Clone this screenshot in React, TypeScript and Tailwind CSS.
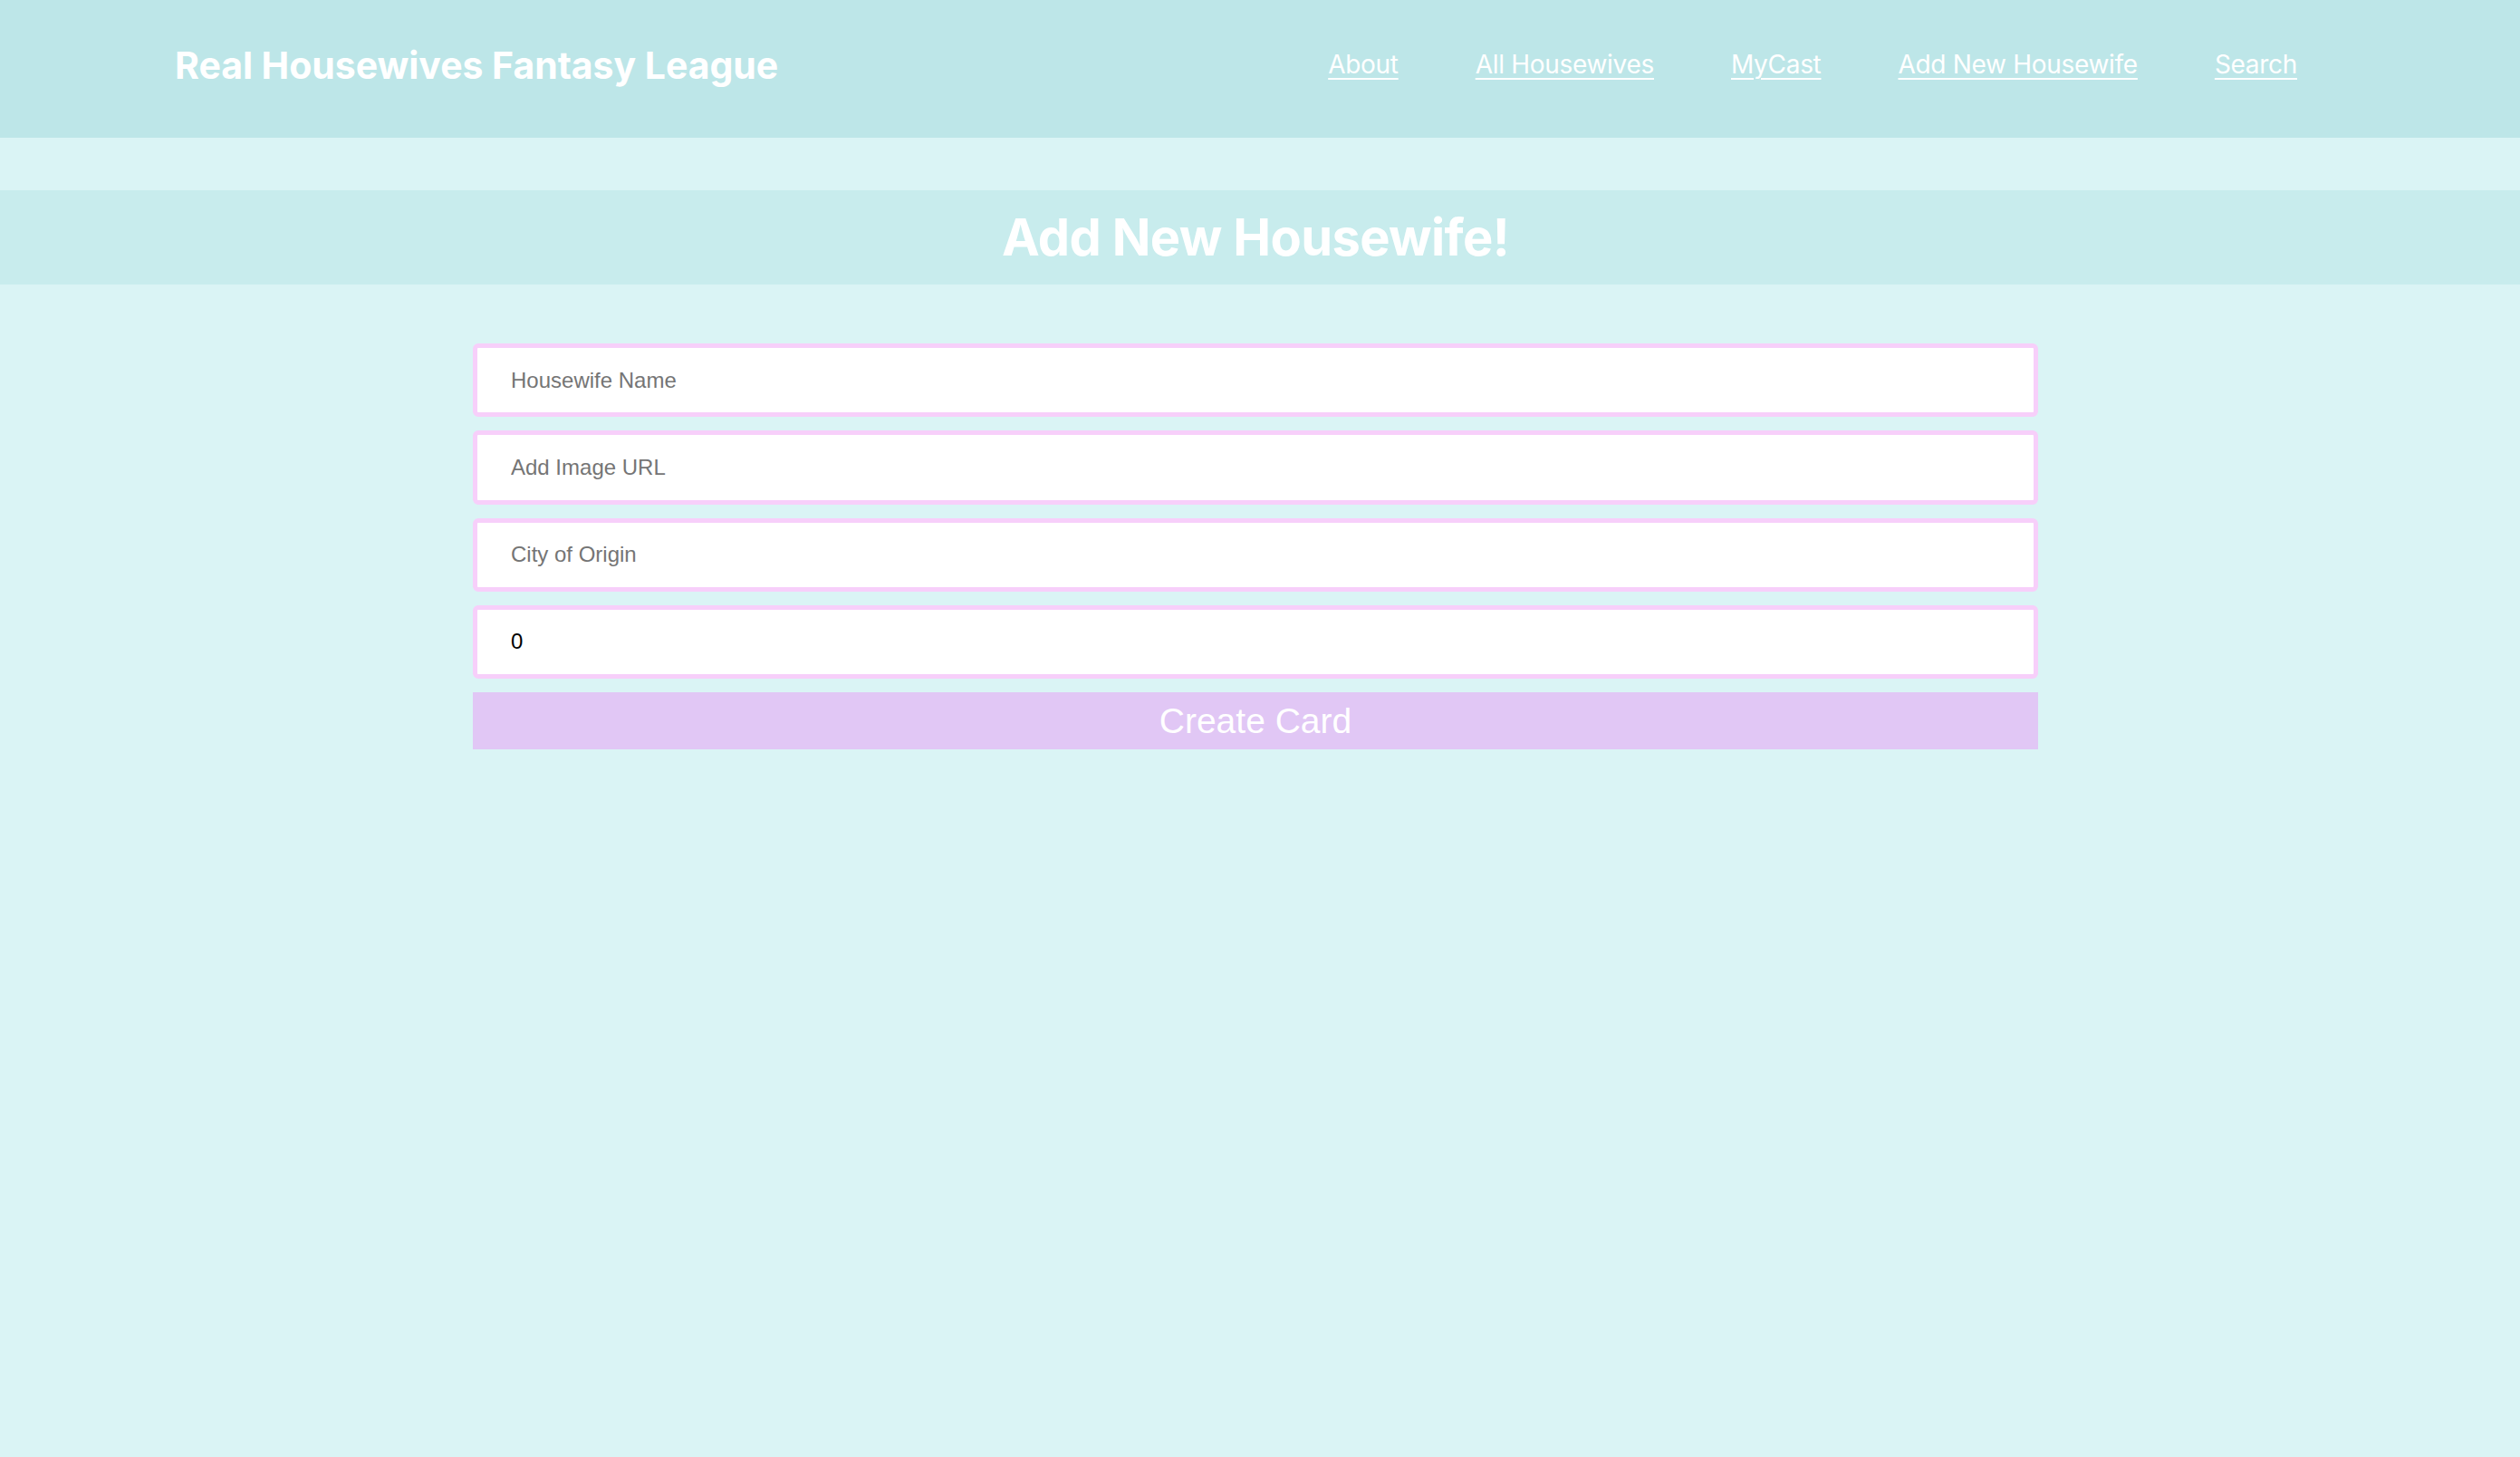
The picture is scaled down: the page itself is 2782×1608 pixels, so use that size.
import React from "react";

export default function App() {
  const links = ["About", "All Housewives", "MyCast", "Add New Housewife", "Search"];
  return (
    <div className="min-h-[1608px] w-full bg-[#daf4f5] font-['Inter','Noto_Sans',sans-serif]">
      <header className="flex h-[152px] items-center justify-between bg-[#bde6e8] pl-[193px] pr-[246px] pb-[8px]">
        <h1 className="text-[41px] font-bold leading-none tracking-[-0.05px] text-white">
          Real Housewives Fantasy League
        </h1>
        <nav className="flex items-center gap-[85px] pb-[2px]">
          {links.map((l) => (
            <a
              key={l}
              href="#"
              className="text-[28px] leading-none tracking-[-0.3px] text-white underline decoration-[2px] underline-offset-[5px]"
            >
              {l}
            </a>
          ))}
        </nav>
      </header>
      <div className="h-[58px]" />
      <div className="flex h-[104px] items-center justify-center bg-[#c8eced] pr-[10px]">
        <h2 className="text-[56px] font-bold leading-none tracking-[-0.65px] text-white">Add New Housewife!</h2>
      </div>
      <div className="flex justify-center pr-[10px] pt-[65px]">
        <form className="flex w-[1728px] flex-col gap-[15px] font-['Liberation_Sans','Arial',sans-serif]">
          <input
            placeholder="Housewife Name"
            className="h-[81.25px] rounded-[6px] border-[5px] border-[#f7cffa] bg-white pl-[37px] text-[24px] text-black outline-none placeholder:text-[#757575]"
          />
          <input
            placeholder="Add Image URL"
            className="h-[81.25px] rounded-[6px] border-[5px] border-[#f7cffa] bg-white pl-[37px] text-[24px] text-black outline-none placeholder:text-[#757575]"
          />
          <input
            placeholder="City of Origin"
            className="h-[81.25px] rounded-[6px] border-[5px] border-[#f7cffa] bg-white pl-[37px] text-[24px] text-black outline-none placeholder:text-[#757575]"
          />
          <input
            defaultValue="0"
            type="text"
            className="h-[81.25px] rounded-[6px] border-[5px] border-[#f7cffa] bg-white pl-[37px] text-[24px] text-black outline-none"
          />
          <button
            type="button"
            className="h-[63px] bg-[#e1c7f5] text-[39px] leading-none text-white"
          >
            Create Card
          </button>
        </form>
      </div>
    </div>
  );
}
